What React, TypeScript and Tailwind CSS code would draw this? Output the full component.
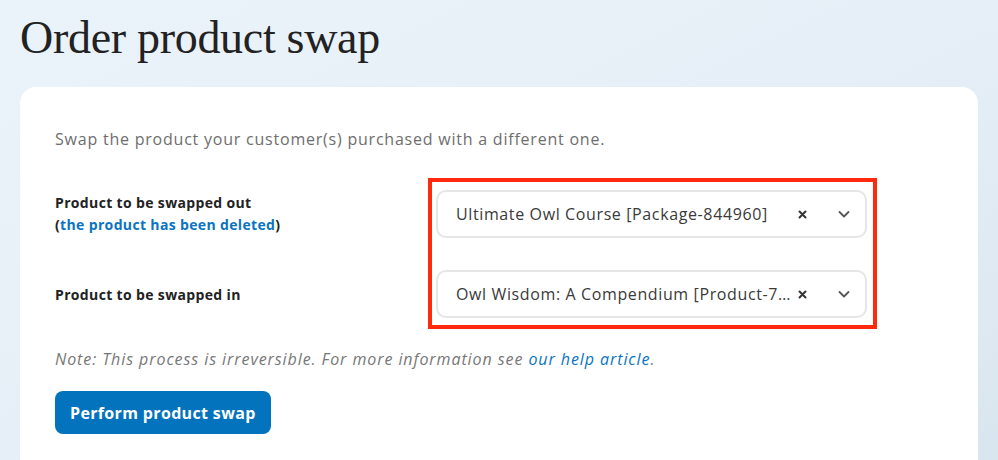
export default function App() {
  const sans = { fontFamily: '"Open Sans", "DejaVu Sans", sans-serif' };
  return (
    <div
      className="min-h-[460px] w-full overflow-hidden bg-gradient-to-br from-[#ebf3fa] via-[#e6eff7] to-[#d9e5ee] px-5 pt-[10px]"
      style={sans}
    >
      <h1 className="font-['Liberation_Serif',serif] text-[46px] leading-[56px] tracking-[-0.3px] text-[#222222]">
        Order product swap
      </h1>
      <div className="mt-[21px] h-[400px] rounded-2xl bg-white pl-[35px] pt-[40px]">
        <p className="text-[16px] leading-6 tracking-[0.78px] text-[#6e6e6e]">
          Swap the product your customer(s) purchased with a different one.
        </p>

        <div className="mt-[27px] flex">
          <div className="flex w-[373px] flex-col gap-[32px] pt-[12px]">
            <div className="flex h-12 flex-col justify-center text-[14px] font-bold leading-[22px] tracking-[0.35px] text-[#222222]">
              <span>Product to be swapped out</span>
              <span>
                (<a className="text-[#0a74c2]">the product has been deleted</a>)
              </span>
            </div>
            <div className="flex h-12 items-center text-[14px] font-bold tracking-[0.35px] text-[#222222]">
              Product to be swapped in
            </div>
          </div>

          <div className="flex w-[449px] flex-col gap-[32px] border-4 border-[#ff2a0d] pb-[7px] pl-[4px] pr-[6px] pt-[8px]">
            <Select value="Ultimate Owl Course [Package-844960]" />
            <Select value="Owl Wisdom: A Compendium [Product-7…" />
          </div>
        </div>

        <p className="mt-[18px] text-[16px] italic leading-6 tracking-[0.92px] text-[#777777]">
          Note: This process is irreversible. For more information see{" "}
          <a className="text-[#0a74c2]">our help article</a>.
        </p>

        <button className="mt-[20px] h-[43px] rounded-lg bg-[#0473be] px-[15px] text-[16px] font-bold tracking-[0.35px] text-white">
          Perform product swap
        </button>
      </div>
    </div>
  );
}

function Select({ value }: { value: string }) {
  return (
    <div className="flex h-12 items-center rounded-[10px] border-2 border-[#e6e6e6] pl-[18px] pr-[14px]">
      <span className="w-[338px] whitespace-nowrap text-[16px] tracking-[0.62px] text-[#3a3a3a]">{value}</span>
      <svg width="9" height="9" viewBox="0 0 9 9" className="ml-[4px]">
        <path d="M1.5 1.5l6 6M7.5 1.5l-6 6" stroke="#333" strokeWidth="2" strokeLinecap="round" />
      </svg>
      <svg width="14" height="14" viewBox="0 0 14 14" className="ml-auto">
        <path d="M2.5 5l4.5 4.5L11.5 5" fill="none" stroke="#555" strokeWidth="1.8" strokeLinecap="round" strokeLinejoin="round" />
      </svg>
    </div>
  );
}
